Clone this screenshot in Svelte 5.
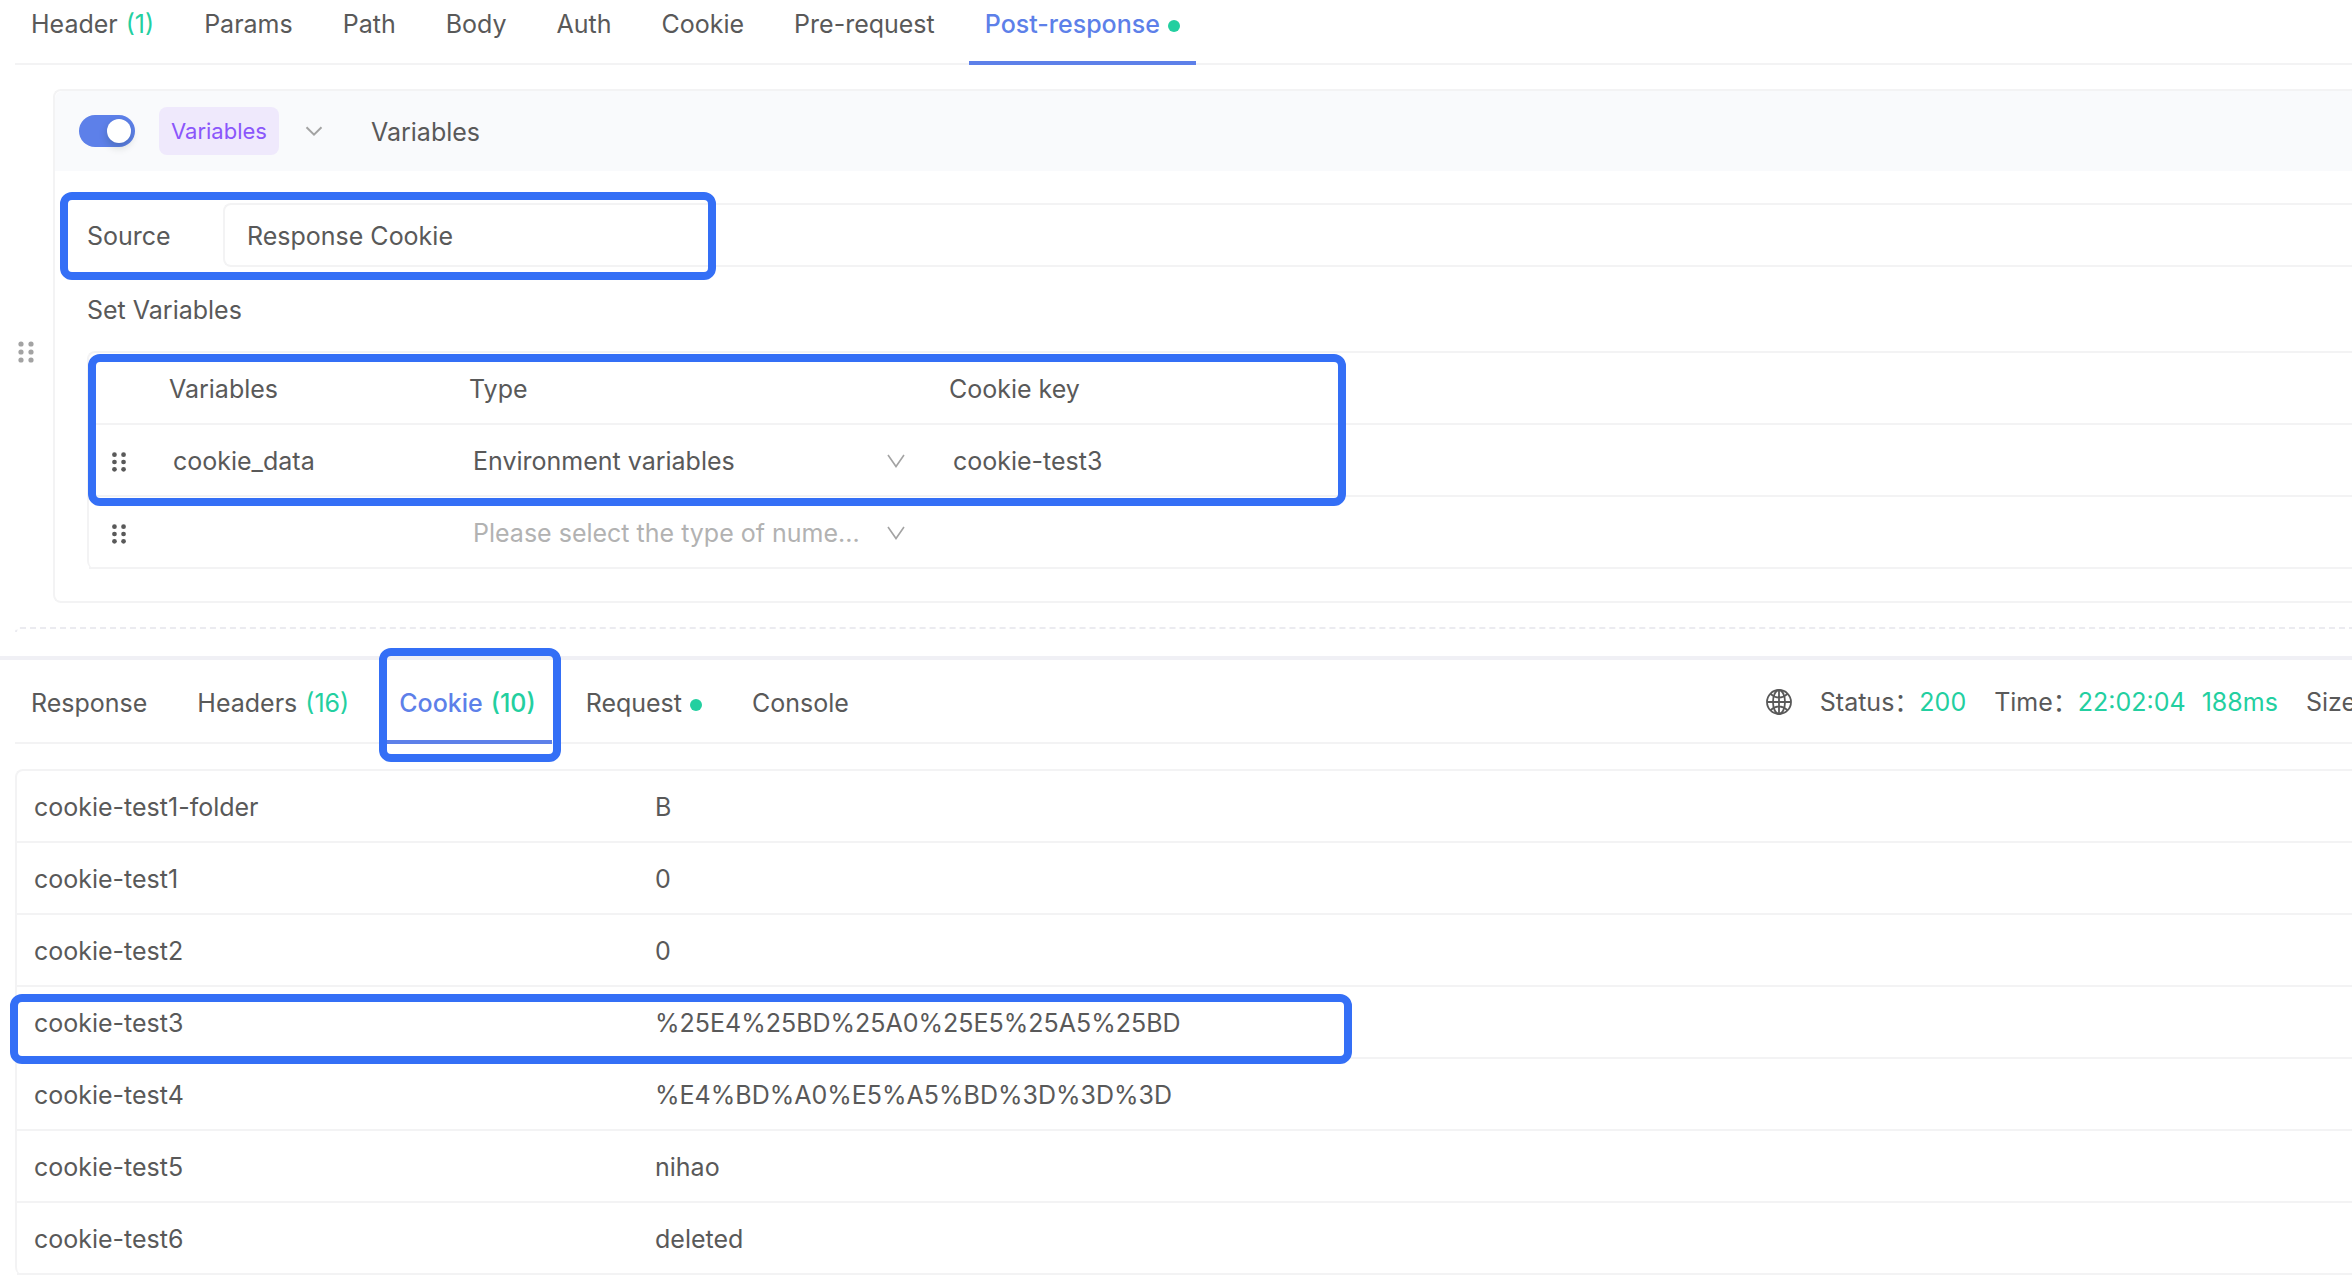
<script lang="ts">
  const requestTabs = [
    { label: 'Header', count: 1 },
    { label: 'Params' },
    { label: 'Path' },
    { label: 'Body' },
    { label: 'Auth' },
    { label: 'Cookie' },
    { label: 'Pre-request' },
    { label: 'Post-response', dot: true },
  ];

  const responseTabs = [
    { label: 'Response' },
    { label: 'Headers', count: 16 },
    { label: 'Cookie', count: 10 },
    { label: 'Request', dot: true },
    { label: 'Console' },
  ];

  const cookies = [
    { name: 'cookie-test1-folder', value: 'B' },
    { name: 'cookie-test1', value: '0' },
    { name: 'cookie-test2', value: '0' },
    { name: 'cookie-test3', value: '%25E4%25BD%25A0%25E5%25A5%25BD' },
    { name: 'cookie-test4', value: '%E4%BD%A0%E5%A5%BD%3D%3D%3D' },
    { name: 'cookie-test5', value: 'nihao' },
    { name: 'cookie-test6', value: 'deleted' },
  ];

  const variables = [
    { name: 'cookie_data', type: 'Environment variables', key: 'cookie-test3' },
    { name: '', type: '', key: '' },
  ];

  let requestTab = $state('Post-response');
  let responseTab = $state('Cookie');
  let enabled = $state(true);
</script>

{#snippet handle()}
  <svg class="handle" viewBox="0 0 16 22" aria-hidden="true">
    <circle cx="3" cy="3" r="2.6" />
    <circle cx="13" cy="3" r="2.6" />
    <circle cx="3" cy="11" r="2.6" />
    <circle cx="13" cy="11" r="2.6" />
    <circle cx="3" cy="19" r="2.6" />
    <circle cx="13" cy="19" r="2.6" />
  </svg>
{/snippet}

{#snippet tabs(items, active, pick, marked)}
  <div class="tabs" role="tablist">
    {#each items as tab}
      <button
        class="tab"
        class:active={tab.label === active}
        role="tab"
        aria-selected={tab.label === active}
        onclick={() => pick(tab.label)}>
        {tab.label}
        {#if tab.count}<span class="count">({tab.count})</span>{/if}
        {#if tab.dot}<span class="dot"></span>{/if}
        {#if tab.label === marked}<span class="mark mark-tab"></span>{/if}
      </button>
    {/each}
  </div>
{/snippet}

<div class="page">
  <section class="request">
    <div class="bar">
      {@render tabs(requestTabs, requestTab, (t) => (requestTab = t), '')}
    </div>

    <div class="step">
      <div class="grip">{@render handle()}</div>
      <div class="card">
        <header>
          <input
            class="switch"
            type="checkbox"
            role="switch"
            aria-label="Enabled"
            bind:checked={enabled} />
          <span class="tag">Variables</span>
          <button class="fold" aria-label="Collapse">
            <svg viewBox="0 0 18 10" width="18" height="10">
              <path d="M1.5 1.2 L9 8.6 L16.5 1.2" />
            </svg>
          </button>
          <span class="title">Variables</span>
        </header>

        <div class="content">
          <div class="source">
            <label for="source">Source</label>
            <select id="source">
              <option>Response Cookie</option>
            </select>
            <span class="mark mark-source"></span>
          </div>

          <p>Set Variables</p>

          <div class="variables">
            <table>
              <thead>
                <tr>
                  <th class="col-grip"></th>
                  <th class="col-name">Variables</th>
                  <th class="col-type">Type</th>
                  <th>Cookie key</th>
                </tr>
              </thead>
              <tbody>
                {#each variables as row}
                  <tr>
                    <td class="col-grip">{@render handle()}</td>
                    <td><input aria-label="Variable" value={row.name} /></td>
                    <td>
                      <div class="type">
                        <select aria-label="Type" class:empty={!row.type}>
                          <option>{row.type || 'Please select the type of nume...'}</option>
                        </select>
                        <svg viewBox="0 0 18 14" width="18" height="14" aria-hidden="true">
                          <path d="M1 1 L9 12.5 L17 1" />
                        </svg>
                      </div>
                    </td>
                    <td><input aria-label="Cookie key" value={row.key} /></td>
                  </tr>
                {/each}
              </tbody>
            </table>
            <span class="mark mark-variables"></span>
          </div>
        </div>
      </div>
    </div>

    <div class="drop-clip"><div class="drop"></div></div>
  </section>

  <section class="response">
    <div class="bar">
      {@render tabs(responseTabs, responseTab, (t) => (responseTab = t), 'Cookie')}
      <div class="status">
        <svg class="globe" viewBox="0 0 26 26" width="26" height="26" aria-hidden="true">
          <circle cx="13" cy="13" r="12" />
          <ellipse cx="13" cy="13" rx="6" ry="12" />
          <path d="M13 1 V25 M1 13 H25 M4.5 4.8 Q13 12.4 21.5 4.8 M4.5 21.2 Q13 13.6 21.5 21.2" />
        </svg>
        <span>Status：<b>200</b></span>
        <span>Time：<b>22:02:04</b><b class="ms">188ms</b></span>
        <span>Size</span>
      </div>
    </div>

    <div class="cookies">
      <table>
        <tbody>
          {#each cookies as cookie}
            <tr>
              <td class="cookie-name">
                {cookie.name}
                {#if cookie.name === 'cookie-test3'}<span class="mark mark-row"></span>{/if}
              </td>
              <td>{cookie.value}</td>
            </tr>
          {/each}
        </tbody>
      </table>
    </div>
  </section>
</div>

<style>
  :global(body) {
    background: #fff;
  }

  .page {
    --text: #595959;
    --line: #f3f3f4;
    --primary: #5d80e9;
    --green: #23cfa0;
    --mark: #346ff6;
    height: 100vh;
    overflow: hidden;
    color: var(--text);
    font-family: Inter, 'Noto Sans CJK SC', sans-serif;
    font-size: 25px;
    line-height: 40px;
  }

  .page * {
    box-sizing: border-box;
  }

  button,
  input,
  select {
    margin: 0;
    padding: 0;
    border: 0;
    outline: 0;
    background: none;
    color: inherit;
    font: inherit;
  }

  select {
    appearance: none;
  }

  svg {
    display: block;
    flex: none;
    fill: none;
    stroke: #a3a3a3;
    stroke-width: 2;
  }

  /* tabs */

  .bar {
    display: flex;
    height: 84px;
    margin-left: 15px;
    border-bottom: 2px solid var(--line);
  }

  /* the request pane is scrolled down a little */
  .request .bar {
    margin-top: -19px;
  }

  .tabs {
    display: flex;
    gap: 18px;
  }

  .tab {
    position: relative;
    display: flex;
    align-items: center;
    gap: 8px;
    height: 84px;
    padding: 1px 16px 0;
    white-space: nowrap;
    cursor: pointer;
  }

  .tab.active {
    color: var(--primary);
    font-weight: 500;
    box-shadow: inset 0 -4px 0 var(--primary);
  }

  .count {
    color: var(--green);
  }

  .dot {
    width: 12px;
    height: 12px;
    margin-top: 4px;
    border-radius: 50%;
    background: var(--green);
  }

  /* processor card */

  .step {
    display: flex;
    margin-top: 24px;
  }

  .grip {
    display: flex;
    align-items: center;
    width: 53px;
    padding: 12px 0 0 18px;
  }

  .handle {
    width: 16px;
    height: 22px;
    fill: #a3a3a3;
    stroke: none;
  }

  .card {
    flex: 1;
    border: 2px solid var(--line);
    border-right: 0;
    border-radius: 8px 0 0 8px;
  }

  .card header {
    display: flex;
    align-items: center;
    height: 80px;
    padding-left: 24px;
    border-radius: 8px 0 0 0;
    background: #f9fafc;
  }

  .switch {
    appearance: none;
    display: flex;
    align-items: center;
    justify-content: flex-end;
    width: 56px;
    height: 32px;
    padding: 4px;
    border-radius: 16px;
    background: var(--primary);
  }

  .switch::before {
    content: '';
    width: 24px;
    height: 24px;
    border-radius: 50%;
    background: #fff;
    box-shadow: 0 4px 8px rgba(0, 35, 11, 0.2);
  }

  .switch:not(:checked) {
    justify-content: flex-start;
    background: #bfbfbf;
  }

  .tag {
    height: 48px;
    margin-left: 24px;
    padding: 0 12px;
    border-radius: 8px;
    background: #efe9fc;
    color: #8a56fb;
    font-size: 22px;
    line-height: 48px;
  }

  .fold {
    margin: 0 48px 0 26px;
  }

  .title {
    padding-top: 2px;
  }

  .content {
    padding: 32px 0 32px 32px;
  }

  .source {
    position: relative;
    display: flex;
    align-items: center;
    height: 64px;
  }

  .source label {
    width: 136px;
    padding-top: 2px;
  }

  .source select {
    flex: 1;
    height: 64px;
    padding: 2px 0 0 22px;
    border: 2px solid var(--line);
    border-right: 0;
    border-radius: 8px 0 0 8px;
  }

  .content p {
    margin: 0;
    padding: 23px 0 21px;
  }

  .variables,
  .cookies {
    position: relative;
    border: 2px solid var(--line);
    border-width: 2px 0 0 2px;
    border-radius: 8px 0 0 8px;
  }

  table {
    width: 100%;
    border-spacing: 0;
    table-layout: fixed;
  }

  th,
  td {
    height: 72px;
    padding: 2px 12px 0;
    border-bottom: 2px solid var(--line);
    font-weight: 400;
    text-align: left;
  }

  .col-grip {
    width: 68px;
    padding: 4px 0 0 22px;
  }

  .col-grip .handle {
    height: 20px;
    fill: #595959;
  }

  .col-name {
    width: 300px;
  }

  .col-type {
    width: 480px;
  }

  td input {
    width: 100%;
    padding-left: 4px;
  }

  .type {
    display: flex;
    align-items: center;
    gap: 16px;
    padding: 0 20px 0 4px;
  }

  .type select {
    flex: 1;
    min-width: 0;
  }

  .type svg {
    stroke-width: 1.6;
  }

  .empty {
    color: #b2b2b2;
  }

  .drop-clip {
    height: 29px;
    margin: 24px 0 0 15px;
    overflow: hidden;
  }

  .drop {
    height: 5px;
    border: 2px dashed #ebebf0;
    border-width: 2px 0 0 2px;
    border-radius: 8px 0 0 0;
  }

  /* response pane */

  .response {
    border-top: 4px solid #f0f0f5;
  }

  .status {
    display: flex;
    align-items: center;
    gap: 28px;
    margin: 0 -4px 0 auto;
    padding-top: 2px;
    white-space: nowrap;
  }

  .status b {
    color: var(--green);
    font-weight: 400;
  }

  .status .ms {
    margin-left: 16px;
  }

  .globe {
    stroke: #595959;
    stroke-width: 1.8;
  }

  .cookies {
    margin: 25px 0 0 15px;
  }

  .cookies td {
    padding-left: 17px;
  }

  .cookies .cookie-name {
    position: relative;
    width: 621px;
  }

  /* callout frames */

  .mark {
    position: absolute;
    border: 8px solid var(--mark);
    border-radius: 12px;
    pointer-events: none;
  }

  .mark-tab {
    top: -12px;
    left: -4px;
    width: 182px;
    height: 114px;
  }

  .mark-source {
    top: -11px;
    left: -27px;
    width: 656px;
    height: 88px;
  }

  .mark-variables {
    top: 1px;
    left: -1px;
    width: 1258px;
    height: 152px;
  }

  .mark-row {
    top: 7px;
    left: -7px;
    width: 1342px;
    height: 70px;
  }
</style>
